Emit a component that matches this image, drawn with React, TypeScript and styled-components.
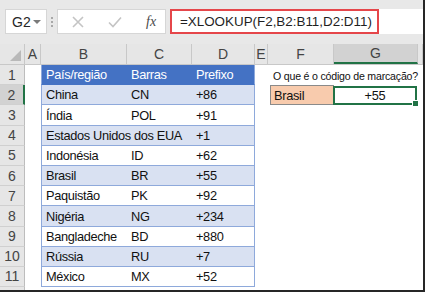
import styled, { createGlobalStyle } from "styled-components";

const GlobalStyle = createGlobalStyle`
  body {
    margin: 0;
    background: #ffffff;
    font-family: "Liberation Sans", Arial, sans-serif;
  }
`;

const COLS = "25px 16px 86px 65px 63px 13px 66px 84px 1fr";

const Frame = styled.div`
  width: 425px;
  height: 292px;
  box-sizing: border-box;
  border-right: 2px solid #262626;
  border-bottom: 2px solid #262626;
  overflow: hidden;
  background: #fff;
`;

const Toolbar = styled.div`
  height: 44px;
  background: #e8e8e8;
  display: flex;
  align-items: flex-start;
  padding: 9px 0 0 5px;
  box-sizing: border-box;
`;

const NameBox = styled.div`
  width: 42px;
  height: 25px;
  box-sizing: border-box;
  background: #fff;
  border: 1px solid #d6d6d6;
  display: flex;
  align-items: center;
  justify-content: space-between;
  padding: 0 5px 0 6px;
  font-size: 14px;
  color: #262626;
`;

const Caret = styled.span`
  width: 0;
  height: 0;
  border-left: 4px solid transparent;
  border-right: 4px solid transparent;
  border-top: 4px solid #7a7a7a;
`;

const Grip = styled.div`
  width: 10px;
  height: 25px;
  display: flex;
  flex-direction: column;
  align-items: center;
  justify-content: center;
  gap: 2px;
  span {
    width: 2px;
    height: 2px;
    background: #a8a8a8;
  }
`;

const Tools = styled.div`
  width: 109px;
  height: 25px;
  box-sizing: border-box;
  background: #fff;
  border: 1px solid #d6d6d6;
  display: flex;
  align-items: center;
  padding-left: 14px;
  gap: 24px;
  svg {
    display: block;
  }
`;

const Fx = styled.span`
  font-family: "Liberation Serif", serif;
  font-style: italic;
  font-size: 14px;
  color: #4a4a4a;
`;

const FormulaBar = styled.div`
  flex: 1;
  height: 25px;
  margin-left: 4px;
  background: #fff;
  display: flex;
`;

const FormulaText = styled.div`
  height: 25px;
  box-sizing: border-box;
  border: 2px solid #e5464a;
  padding: 0 5px 0 8px;
  display: flex;
  align-items: center;
  font-size: 13.4px;
  color: #1f1f1f;
  white-space: nowrap;
`;

const HeaderRow = styled.div`
  display: grid;
  grid-template-columns: ${COLS};
  height: 21px;
  background: #e6e6e6;
  border-bottom: 1px solid #c8c8c8;
  box-sizing: border-box;
`;

const ColHead = styled.div<{ $active?: boolean }>`
  display: flex;
  align-items: center;
  justify-content: center;
  font-size: 14px;
  color: #444;
  border-right: 1px solid #c8c8c8;
  box-sizing: border-box;
  background: ${(p) => (p.$active ? "#d2d2d2" : "transparent")};
  border-bottom: ${(p) => (p.$active ? "2px solid #217346" : "none")};
`;

const Corner = styled.div`
  border-right: 1px solid #c8c8c8;
  display: flex;
  align-items: flex-end;
  justify-content: flex-end;
  padding: 0 3px 3px 0;
  span {
    width: 0;
    height: 0;
    border-left: 11px solid transparent;
    border-bottom: 11px solid #b9b9b9;
  }
`;

const Row = styled.div`
  display: grid;
  grid-template-columns: ${COLS};
  height: 20.2px;
`;

const RowHead = styled.div<{ $active?: boolean }>`
  display: flex;
  align-items: center;
  justify-content: center;
  font-size: 14px;
  color: #444;
  box-sizing: border-box;
  background: ${(p) => (p.$active ? "#d2d2d2" : "#e6e6e6")};
  border-bottom: 1px solid #d0d0d0;
  border-right: ${(p) => (p.$active ? "2px solid #217346" : "1px solid #bdbdbd")};
`;

type Tone = "head" | "band" | "plain";

const TableCell = styled.div<{ $tone: Tone; $edge?: "left" | "right" }>`
  display: flex;
  align-items: flex-end;
  padding: 0 0 2px 4px;
  box-sizing: border-box;
  font-size: 12.8px;
  letter-spacing: -0.35px;
  white-space: nowrap;
  color: ${(p) => (p.$tone === "head" ? "#fff" : "#111")};
  background: ${(p) =>
    p.$tone === "head" ? "#4472c4" : p.$tone === "band" ? "#d9e1f2" : "#fff"};
  border-bottom: 1px solid ${(p) => (p.$tone === "head" ? "#4472c4" : "#8ea9db")};
  border-left: ${(p) => (p.$edge === "left" ? "1px solid #8ea9db" : "none")};
  border-right: ${(p) => (p.$edge === "right" ? "1px solid #8ea9db" : "none")};
  span {
    position: relative;
    z-index: 1;
  }
`;

const Blank = styled.div``;

const Question = styled.div`
  grid-column: span 3;
  display: flex;
  align-items: flex-end;
  padding: 0 0 3px 5px;
  font-size: 10.6px;
  letter-spacing: -0.2px;
  color: #111;
  white-space: nowrap;
`;

const LookupCell = styled.div`
  margin-left: 2px;
  background: #f8cbad;
  border: 1px solid #8a8a8a;
  border-right: none;
  display: flex;
  align-items: flex-end;
  padding: 0 0 1px 3px;
  font-size: 12.8px;
  letter-spacing: -0.3px;
  color: #111;
`;

const ResultCell = styled.div`
  position: relative;
  margin: 1px 1px 0 -1px;
  border: 2px solid #217346;
  display: flex;
  align-items: center;
  justify-content: center;
  font-size: 12.8px;
  letter-spacing: -0.3px;
  color: #111;
`;

const FillHandle = styled.span`
  position: absolute;
  right: -4px;
  bottom: -4px;
  width: 5px;
  height: 5px;
  background: #217346;
  border: 1px solid #fff;
`;

const data: [string, string, string][] = [
  ["China", "CN", "+86"],
  ["Índia", "POL", "+91"],
  ["Estados Unidos dos EUA", "", "+1"],
  ["Indonésia", "ID", "+62"],
  ["Brasil", "BR", "+55"],
  ["Paquistão", "PK", "+92"],
  ["Nigéria", "NG", "+234"],
  ["Bangladeche", "BD", "+880"],
  ["Rússia", "RU", "+7"],
  ["México", "MX", "+52"],
];

const columns = ["A", "B", "C", "D", "E", "F", "G", ""];

const App = () => {
  return (
    <Frame>
      <GlobalStyle />
      <Toolbar>
        <NameBox>
          G2
          <Caret />
        </NameBox>
        <Grip>
          <span />
          <span />
          <span />
        </Grip>
        <Tools>
          <svg width="12" height="12" viewBox="0 0 12 12">
            <path d="M1 1l10 10M11 1L1 11" stroke="#c4c4c4" strokeWidth="1.6" />
          </svg>
          <svg width="14" height="12" viewBox="0 0 14 12">
            <path d="M1 6.5l4 4L13 1.5" stroke="#c4c4c4" strokeWidth="1.6" fill="none" />
          </svg>
          <Fx>fx</Fx>
        </Tools>
        <FormulaBar>
          <FormulaText>=XLOOKUP(F2,B2:B11,D2:D11)</FormulaText>
        </FormulaBar>
      </Toolbar>

      <HeaderRow>
        <Corner>
          <span />
        </Corner>
        {columns.map((c, i) => (
          <ColHead key={i} $active={c === "G"}>
            {c}
          </ColHead>
        ))}
      </HeaderRow>

      <Row>
        <RowHead>1</RowHead>
        <Blank />
        <TableCell $tone="head" $edge="left">
          <span>País/região</span>
        </TableCell>
        <TableCell $tone="head">
          <span>Barras</span>
        </TableCell>
        <TableCell $tone="head" $edge="right">
          <span>Prefixo</span>
        </TableCell>
        <Blank />
        <Question>O que é o código de marcação?</Question>
      </Row>

      {data.map(([country, code, prefix], i) => {
        const tone: Tone = i % 2 === 0 ? "band" : "plain";
        return (
          <Row key={country}>
            <RowHead $active={i === 0}>{i + 2}</RowHead>
            <Blank />
            <TableCell $tone={tone} $edge="left">
              <span>{country}</span>
            </TableCell>
            <TableCell $tone={tone}>
              <span>{code}</span>
            </TableCell>
            <TableCell $tone={tone} $edge="right">
              <span>{prefix}</span>
            </TableCell>
            <Blank />
            {i === 0 ? (
              <>
                <LookupCell>Brasil</LookupCell>
                <ResultCell>
                  +55
                  <FillHandle />
                </ResultCell>
              </>
            ) : null}
          </Row>
        );
      })}
      <Row>
        <RowHead />
      </Row>
    </Frame>
  );
};

export default App;
